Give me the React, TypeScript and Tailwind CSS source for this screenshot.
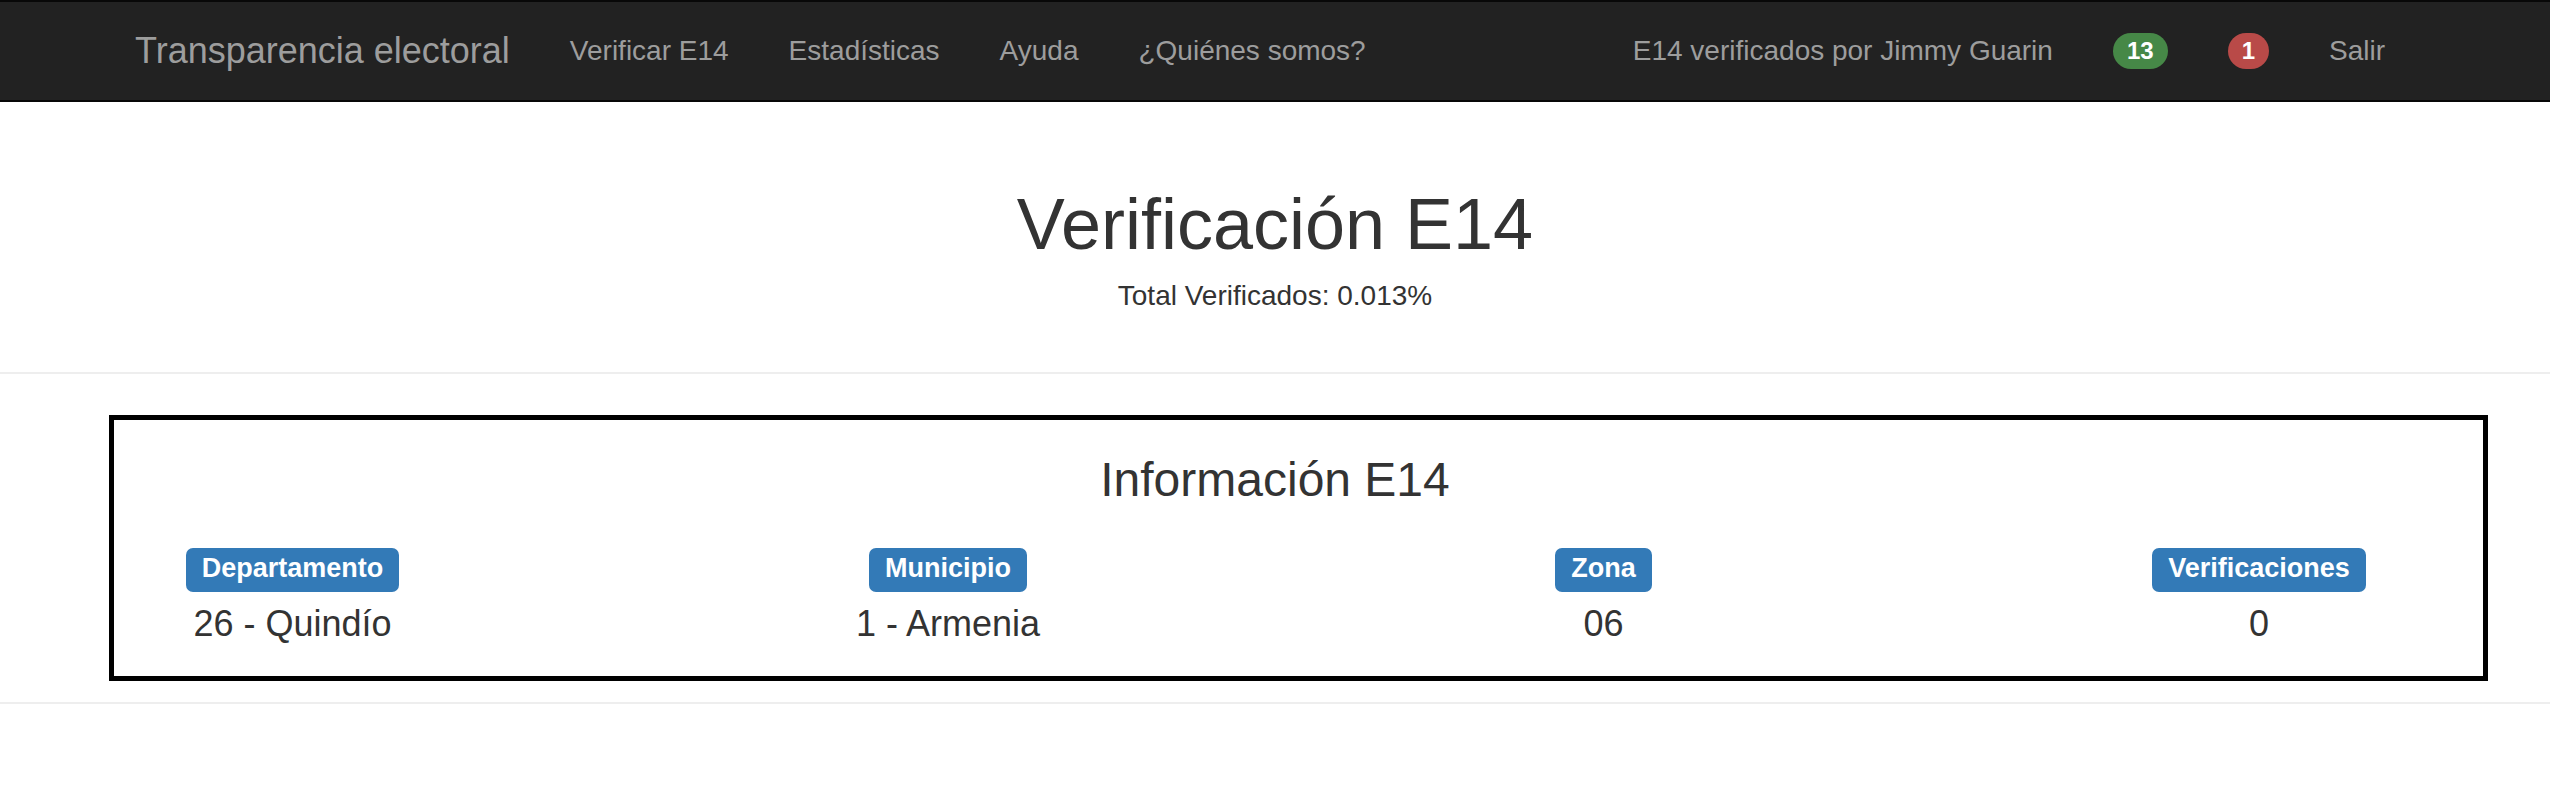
import React from "react";

const navLinks = ["Verificar E14", "Estadísticas", "Ayuda", "¿Quiénes somos?"];

const infoItems = [
  { label: "Departamento", value: "26 - Quindío" },
  { label: "Municipio", value: "1 - Armenia" },
  { label: "Zona", value: "06" },
  { label: "Verificaciones", value: "0" },
];

export default function App() {
  return (
    <div className="min-h-screen w-full bg-white font-['Liberation_Sans',Arial,sans-serif] text-[#333]">
      {/* Navbar */}
      <nav className="h-[102px] border-y-2 border-[#080808] bg-[#222]">
        <div className="mx-auto flex h-full w-[2340px] items-center px-[30px]">
          <a className="pr-[30px] text-[36px] leading-[40px] text-[#9d9d9d]">Transparencia electoral</a>
          <ul className="flex items-center">
            {navLinks.map((l) => (
              <li key={l} className="px-[30px] text-[28px] leading-[40px] text-[#9d9d9d]">
                {l}
              </li>
            ))}
          </ul>
          <ul className="ml-auto flex items-center">
            <li className="px-[30px] text-[28px] leading-[40px] text-[#9d9d9d]">E14 verificados por Jimmy Guarin</li>
            <li className="flex items-center px-[30px]">
              <span className="rounded-full bg-[#468847] px-[14px] py-[6px] text-[24px] font-bold leading-[24px] text-white">13</span>
            </li>
            <li className="flex items-center px-[30px]">
              <span className="rounded-full bg-[#b94a48] px-[14px] py-[6px] text-[24px] font-bold leading-[24px] text-white">1</span>
            </li>
            <li className="px-[30px] text-[28px] leading-[40px] text-[#9d9d9d]">Salir</li>
          </ul>
        </div>
      </nav>

      {/* Header */}
      <div className="flex flex-col items-center pt-[82px]">
        <h1 className="text-[72px] font-normal leading-[80px]">Verificación E14</h1>
        <p className="mt-[12px] text-[28px] leading-[40px]">Total Verificados: 0.013%</p>
      </div>

      <hr className="mt-[56px] border-t-2 border-[#eee]" />

      {/* Info box */}
      <div className="ml-[109px] mt-[41px] w-[2379px] border-[5px] border-black pb-[32px] pt-[33px]">
        <h3 className="pr-[47px] text-center text-[48px] font-normal leading-[53px]">Información E14</h3>
        <div className="mt-[42px] flex justify-between pl-[28.5px] pr-[74px]">
          {infoItems.map((it) => (
            <div key={it.label} className="flex w-[300px] flex-col items-center">
              <span className="rounded-[7px] bg-[#337ab7] px-[16px] pb-[9px] pt-[6px] text-[27px] font-bold leading-[29px] text-white">
                {it.label}
              </span>
              <span className="mt-[12px] text-[36px] leading-[40px]">{it.value}</span>
            </div>
          ))}
        </div>
      </div>

      <hr className="mt-[21px] border-t-2 border-[#eee]" />
    </div>
  );
}
